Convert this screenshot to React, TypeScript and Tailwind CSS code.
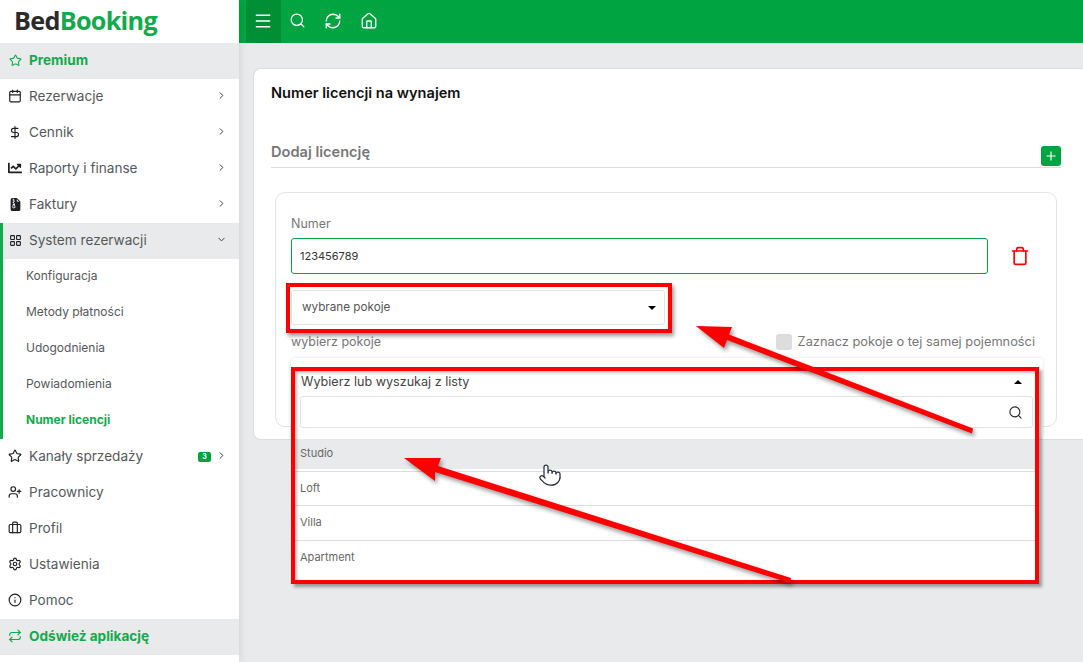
import React from "react";
import {
  Star,
  Calendar,
  DollarSign,
  ChevronRight,
  ChevronDown,
  LayoutGrid,
  UserPlus,
  Briefcase,
  Settings,
  Info,
  Repeat,
  Menu,
  Search,
  RefreshCw,
  House,
  Plus,
  Trash,
  Pointer,
} from "lucide-react";
import { BsFileEarmarkZipFill } from "react-icons/bs";
import { FaChartLine } from "react-icons/fa";

const font = "font-['Inter','Liberation_Sans',sans-serif]";

const NavRow = ({
  icon,
  label,
  arrow,
  badge,
}: {
  icon: React.ReactNode;
  label: string;
  arrow?: boolean;
  badge?: string;
}) => (
  <div className="flex items-center h-9 pl-2 pr-[12px] text-[#55585b] text-[13.6px]">
    <span className="w-[14px] flex justify-center text-[#1d1f22] pb-[2px]">{icon}</span>
    <span className="ml-[7px] flex-1 pb-[2px]">{label}</span>
    {badge && (
      <span className="w-[13px] h-[10px] mr-[5px] rounded-[2px] bg-[#00a541] text-white text-[7px] font-bold leading-[10px] text-center">
        {badge}
      </span>
    )}
    {arrow && <ChevronRight size={11} className="text-[#333] mb-[3px]" strokeWidth={2} />}
  </div>
);

const SubRow = ({ label, active }: { label: string; active?: boolean }) => (
  <div
    className={`flex items-center h-9 pl-[23px] pb-[2px] text-[12px] ${
      active ? "text-[#12ab4b] font-bold" : "text-[#55585b]"
    }`}
  >
    {label}
  </div>
);

const Option = ({ label, hover, last }: { label: string; hover?: boolean; last?: boolean }) => (
  <div className={`h-[34.5px] pt-[1.5px] ${last ? "" : "border-b border-[#ddd]"}`}>
    <div className={`h-[30px] flex items-center pl-[9px] text-[11px] text-[#666] ${hover ? "bg-[#e9eaec]" : ""}`}>
      {label}
    </div>
  </div>
);

export default function App() {
  return (
    <div className={`relative flex w-[1083px] h-[662px] overflow-hidden bg-[#e9eaec] ${font}`}>
      <aside className="relative z-10 w-[239px] shrink-0 bg-white shadow-[0_0_8px_rgba(0,0,0,0.12)]">
        <div className="h-[43px] flex items-center pl-[14px] pb-[2px] font-['Open_Sans',sans-serif] font-bold text-[25.2px] tracking-[-0.7px]">
          <span className="text-[#2b2b2b]">Bed</span>
          <span className="text-[#12ab4b]">Booking</span>
        </div>
        <div className="flex items-center h-9 pl-2 bg-[#e9eaec] text-[#12ab4b] font-bold text-[13.6px]">
          <span className="w-[14px] flex justify-center pb-[2px]"><Star size={13} /></span>
          <span className="ml-[7px] pb-[2px]">Premium</span>
        </div>
        <NavRow icon={<Calendar size={14} />} label="Rezerwacje" arrow />
        <NavRow icon={<DollarSign size={15} />} label="Cennik" arrow />
        <NavRow icon={<FaChartLine size={14} />} label="Raporty i finanse" arrow />
        <NavRow icon={<BsFileEarmarkZipFill size={13} />} label="Faktury" arrow />
        <div className="border-l-[3px] border-[#12ab4b]">
          <div className="flex items-center h-9 pl-[5px] pr-[12px] bg-[#e9eaec] text-[#55585b] text-[13.6px]">
            <span className="w-[14px] flex justify-center text-[#1d1f22] pb-[2px]"><LayoutGrid size={13} /></span>
            <span className="ml-[7px] flex-1 pb-[2px]">System rezerwacji</span>
            <ChevronDown size={11} className="text-[#333] mb-[3px]" />
          </div>
          <SubRow label="Konfiguracja" />
          <SubRow label="Metody płatności" />
          <SubRow label="Udogodnienia" />
          <SubRow label="Powiadomienia" />
          <SubRow label="Numer licencji" active />
        </div>
        <NavRow icon={<Star size={14} />} label="Kanały sprzedaży" arrow badge="3" />
        <NavRow icon={<UserPlus size={14} />} label="Pracownicy" />
        <NavRow icon={<Briefcase size={14} />} label="Profil" />
        <NavRow icon={<Settings size={14} />} label="Ustawienia" />
        <NavRow icon={<Info size={14} />} label="Pomoc" />
        <div className="flex items-center h-9 pl-2 bg-[#e9eaec] text-[#12ab4b] font-bold text-[13.6px]">
          <span className="w-[14px] flex justify-center pb-[2px]"><Repeat size={14} /></span>
          <span className="ml-[7px] pb-[2px]">Odśwież aplikację</span>
        </div>
      </aside>

      <div className="flex-1 min-w-0">
        <header className="h-[43px] bg-[#00a541] flex items-center pl-[7px] text-white">
          <div className="w-[35px] h-full bg-[#018f36] flex items-center justify-center pr-[1px] pb-[1px]">
            <Menu size={20} strokeWidth={1.75} />
          </div>
          <div className="ml-[8px] flex items-center gap-[18px] pb-[2px]">
            <Search size={17} strokeWidth={1.75} />
            <RefreshCw size={18} strokeWidth={1.75} />
            <House size={18} strokeWidth={1.75} />
          </div>
        </header>

        <main className="pl-[14px] pt-[25px]">
          <section className="h-[372px] bg-white rounded-l-[8px] border-y border-l border-[#dcdde0] pl-[17px] pr-[22px] pt-[15px]">
            <h1 className="text-[14.6px] font-semibold text-[#111] leading-[18px]">Numer licencji na wynajem</h1>
            <div className="mt-[41px] h-[25px] flex items-start justify-between border-b border-[#ddd]">
              <span className="text-[14.6px] font-semibold text-[#777] leading-[18px]">Dodaj licencję</span>
              <span className="mt-[3px] w-5 h-5 rounded-[3px] bg-[#00a541] text-white flex items-center justify-center">
                <Plus size={14} strokeWidth={2} />
              </span>
            </div>
            <div className="relative mt-[24px] ml-[4px] mr-[4px] h-[235px] rounded-[10px] border border-[#e2e3e5] pl-[15px] pr-[13px] pt-[23px]">
              <label className="block text-[12.5px] text-[#777] leading-[16px]">Numer</label>
              <div className="mt-[6px] flex items-center">
                <div className="w-[697px] h-[36px] rounded-[3px] border border-[#00a541] flex items-center pl-2 text-[11px] text-[#333]">
                  123456789
                </div>
                <Trash size={20} strokeWidth={2} className="ml-[22px] text-[#f00]" />
              </div>
              <div className="mt-[16px] w-[374px] h-[35px] rounded-[3px] border border-[#e2e3e5] flex items-center justify-between pl-[10px] pr-[8px] text-[11.7px] text-[#555]">
                wybrane pokoje
                <span className="w-0 h-0 border-x-[4px] border-x-transparent border-t-[4px] border-t-black" />
              </div>
              <div className="mt-[7px] flex items-center justify-between pr-[8px]">
                <span className="text-[12.5px] text-[#777] leading-[16px]">wybierz pokoje</span>
                <span className="flex items-center text-[12.8px] text-[#777]">
                  <span className="w-4 h-4 rounded-[3px] bg-[#ddd] mr-[6px]" />
                  Zaznacz pokoje o tej samej pojemności
                </span>
              </div>
              <div className="absolute left-[15px] top-[165px] w-[752px]">
                <div className="bg-white rounded-t-[4px] shadow-[0_0_3px_rgba(0,0,0,0.12)] pb-[9px]">
                  <div className="h-[38px] flex items-center justify-between pl-[10px] pr-[21px] pt-[10px] text-[12.6px] text-[#444]">
                    Wybierz lub wyszukaj z listy
                    <span className="w-0 h-0 border-x-[4px] border-x-transparent border-b-[4px] border-b-black" />
                  </div>
                  <div className="ml-[9px] w-[733px] h-[32px] rounded-[3px] border border-[#e2e3e5] flex items-center justify-end pr-[9px]">
                    <Search size={15} strokeWidth={1.75} className="text-[#222]" />
                  </div>
                </div>
                <div className="w-[746px] h-[146px] bg-white">
                  <Option label="Studio" hover />
                  <Option label="Loft" />
                  <Option label="Villa" />
                  <Option label="Apartment" last />
                </div>
              </div>
            </div>
          </section>
        </main>
      </div>

      {/* annotations on top of the screenshot */}
      <div className="absolute z-20 left-[286px] top-[283px] w-[386px] h-[50px] border-4 border-[#f00] shadow-[2px_3px_4px_rgba(0,0,0,0.4)]" />
      <div className="absolute z-20 left-[291px] top-[367px] w-[748px] h-[217px] border-4 border-[#f00] shadow-[3px_3px_3px_rgba(0,0,0,0.35),inset_2px_2px_3px_rgba(0,0,0,0.25)]" />
      <svg className="absolute z-20 left-0 top-0 pointer-events-none" width="1083" height="662" viewBox="0 0 1083 662">
        <g fill="#f00" style={{ filter: "drop-shadow(2px 3px 2px rgba(0,0,0,0.4))" }}>
          <polygon points="696,326 732,327 729,334.5 973,428.5 972,433.5 727,340 724,348" />
          <polygon points="404,458 441,458 438,466 791,578 790,583 435,472 435,481" />
        </g>
      </svg>
      <Pointer size={24} strokeWidth={1.25} className="absolute z-30 left-[538px] top-[463px] text-[#2a3040] fill-white" />
    </div>
  );
}
